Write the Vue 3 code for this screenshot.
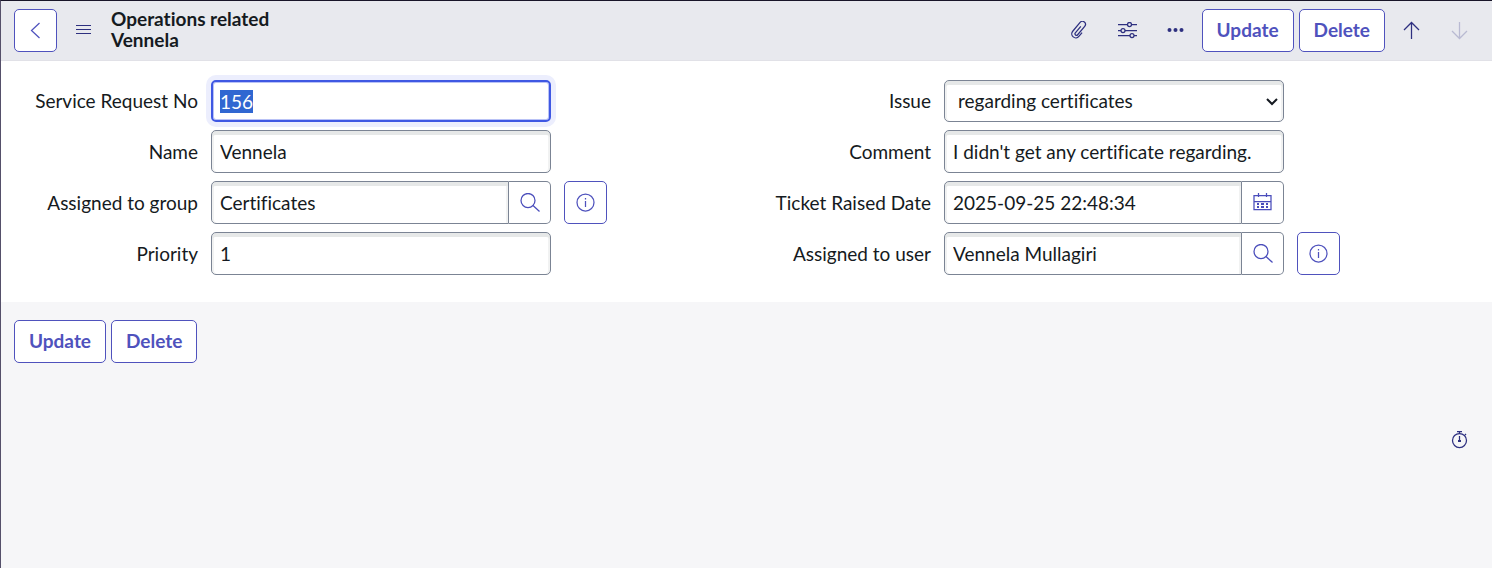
<script setup>
import { onMounted, ref } from 'vue'

const requestNo = ref('156')
const name = ref('Vennela')
const group = ref('Certificates')
const priority = ref('1')
const issue = ref('regarding certificates')
const comment = ref("I didn't get any certificate regarding.")
const raised = ref('2025-09-25 22:48:34')
const user = ref('Vennela Mullagiri')
const firstField = ref(null)

onMounted(() => {
  firstField.value.focus()
  firstField.value.select()
})
</script>

<template>
  <div class="page">
    <header class="bar">
      <button class="btn square" type="button" aria-label="Back">
        <svg width="19" height="19" viewBox="0 0 19 19"><path d="M13.500 2 5.500 9.500l8 7.500" /></svg>
      </button>
      <button class="icon menu" type="button" aria-label="Menu">
        <svg class="thin" width="15" height="11" viewBox="0 0 15 11"><path d="M0 .5h15M0 4.500h15M0 8.500h15" /></svg>
      </button>
      <h1 class="title">Operations related<br />Vennela</h1>
      <div class="tools">
        <button class="icon" type="button" aria-label="Attachments">
          <svg width="19" height="19" viewBox="0 0 19 19"><path transform="translate(9 9) rotate(40)" d="M4 0V5a4 4 0 0 1-8 0V-6.500a3 3 0 0 1 6 0V4.500a1.500 1.500 0 0 1-3 0V-4" /></svg>
        </button>
        <button class="icon" type="button" aria-label="Personalize form">
          <svg width="19" height="17" viewBox="0 0 19 17"><path d="M0 2.500h9.500M13.500 2.500H19M0 8.500h3M7 8.500h12M0 13.500h12M16 13.500h3" /><circle cx="11.500" cy="2.500" r="2" /><circle cx="5" cy="8.500" r="2" /><circle cx="14" cy="13.500" r="2" /></svg>
        </button>
        <button class="icon" type="button" aria-label="More options">
          <svg class="solid" width="17" height="5" viewBox="0 0 17 5"><circle cx="2.500" cy="2" r="2" /><circle cx="8.500" cy="2" r="2" /><circle cx="14.500" cy="2" r="2" /></svg>
        </button>
        <button class="btn" type="button">Update</button>
        <button class="btn" type="button">Delete</button>
        <button class="icon" type="button" aria-label="Previous record">
          <svg width="17" height="19" viewBox="0 0 17 19"><path d="M8.500 18V1.500M1 9l7.500-7.500L16 9" /></svg>
        </button>
        <button class="icon" type="button" aria-label="Next record" disabled>
          <svg width="17" height="19" viewBox="0 0 17 19"><path d="M8.500 1v16.500M1 10l7.500 7.500L16 10" /></svg>
        </button>
      </div>
    </header>

    <form class="form" @submit.prevent>
      <div class="column">
        <div class="row">
          <label for="request-no">Service Request No</label>
          <input id="request-no" ref="firstField" v-model="requestNo" class="control" type="text" />
        </div>
        <div class="row">
          <label for="name">Name</label>
          <input id="name" v-model="name" class="control" type="text" />
        </div>
        <div class="row">
          <label for="group">Assigned to group</label>
          <div class="group">
            <input id="group" v-model="group" class="control" type="text" />
            <button class="addon" type="button" aria-label="Look up group">
              <svg width="20" height="20" viewBox="0 0 20 20"><circle cx="8" cy="7.500" r="7" /><path d="m13 12.500 6.500 6" /></svg>
            </button>
          </div>
          <button class="btn square" type="button" aria-label="Group information">
            <svg width="19" height="19" viewBox="0 0 19 19"><circle cx="9.500" cy="9.500" r="8.500" /><path d="M9.500 8v6M9.500 5v1.500" /></svg>
          </button>
        </div>
        <div class="row">
          <label for="priority">Priority</label>
          <input id="priority" v-model="priority" class="control" type="text" />
        </div>
      </div>

      <div class="column">
        <div class="row">
          <label for="issue">Issue</label>
          <div class="select">
            <select id="issue" v-model="issue" class="control">
              <option>regarding certificates</option>
            </select>
            <svg class="chevron" width="12" height="8" viewBox="0 0 12 8"><path d="m1 1 5 5 5-5" /></svg>
          </div>
        </div>
        <div class="row">
          <label for="comment">Comment</label>
          <input id="comment" v-model="comment" class="control" type="text" />
        </div>
        <div class="row">
          <label for="raised">Ticket Raised Date</label>
          <div class="group">
            <input id="raised" v-model="raised" class="control" type="text" />
            <button class="addon" type="button" aria-label="Choose date">
              <svg width="19" height="19" viewBox="0 0 19 19"><path d="M1 2.500h17v14H1zM1 8.500h17M5.500 0v4M13.500 0v4" /><path class="dots" d="M4 11h2M8 11h3M13 11h2M4 14h2M8 14h3M13 14h2" /></svg>
            </button>
          </div>
        </div>
        <div class="row">
          <label for="user">Assigned to user</label>
          <div class="group">
            <input id="user" v-model="user" class="control" type="text" />
            <button class="addon" type="button" aria-label="Look up user">
              <svg width="20" height="20" viewBox="0 0 20 20"><circle cx="8" cy="7.500" r="7" /><path d="m13 12.500 6.500 6" /></svg>
            </button>
          </div>
          <button class="btn square" type="button" aria-label="User information">
            <svg width="19" height="19" viewBox="0 0 19 19"><circle cx="9.500" cy="9.500" r="8.500" /><path d="M9.500 8v6M9.500 5v1.500" /></svg>
          </button>
        </div>
      </div>
    </form>

    <footer class="footer">
      <div class="actions">
        <button class="btn" type="button">Update</button>
        <button class="btn" type="button">Delete</button>
      </div>
      <button class="icon timer" type="button" aria-label="Response time">
        <svg width="17" height="19" viewBox="0 0 17 19"><circle cx="8.500" cy="10.500" r="7" /><path d="M6 1.500h5M8.500 1.500v2M14 4l1 1M8.500 6v5" /><path class="dots" d="M7 11h3" /></svg>
      </button>
    </footer>
  </div>
</template>

<style>
body {
  margin: 0;
  background: #f6f6f8;
}
</style>

<style scoped>
.page {
  box-sizing: border-box;
  min-height: 100vh;
  border-top: 1px solid #181528;
  border-left: 1px solid #55506a;
  background: #f6f6f8;
  color: #151a21;
  font: 19px/22px Lato, "Open Sans", sans-serif;
  font-variant-ligatures: none;
}

button,
input,
select {
  box-sizing: border-box;
  margin: 0;
  font: inherit;
  font-variant-ligatures: none;
}

svg {
  display: block;
  fill: none;
  stroke: currentColor;
  stroke-width: 1.25;
}

.solid {
  fill: currentColor;
  stroke: none;
}

.thin {
  stroke-width: 1;
}

.dots {
  stroke-width: 2;
}

.bar {
  display: flex;
  align-items: center;
  box-sizing: border-box;
  min-height: 60px;
  padding: 0 11px 0 13px;
  border-bottom: 1px solid #e1e1e7;
  background: #e8e9ee;
}

.title {
  margin: 0 0 4px 6px;
  font-size: 19px;
  line-height: 21px;
  font-weight: 700;
}

.tools {
  display: flex;
  gap: 5px;
  margin-left: auto;
}

.btn {
  display: flex;
  align-items: center;
  justify-content: center;
  height: 43px;
  padding: 0 14px 2px;
  border: 1px solid #4f52bd;
  border-radius: 5px;
  background: #fff;
  color: #4f52bd;
  font-weight: 700;
}

.square {
  flex: none;
  width: 43px;
  padding: 0;
}

.icon {
  display: flex;
  align-items: center;
  justify-content: center;
  width: 43px;
  height: 43px;
  padding: 0;
  border: 0;
  background: none;
  color: #2e3080;
}

.icon:disabled {
  color: #b9bad2;
}

.menu {
  margin-left: 5px;
}

.form {
  display: grid;
  grid-template-columns: 1fr 1fr;
  padding: 19px 25px 27px 0;
  background: #fff;
}

.column {
  display: flex;
  flex-direction: column;
  gap: 8px;
  padding-right: 127px;
}

.row {
  display: grid;
  grid-template-columns: 197px minmax(0, 1fr) 43px;
  column-gap: 13px;
  align-items: center;
  height: 43px;
}

.row:first-child {
  height: 42px;
}

.row label {
  text-align: right;
}

.control {
  width: 100%;
  height: 100%;
  padding: 0 8px;
  border: 1px solid #7b8494;
  border-radius: 5px;
  outline: none;
  background: #fff;
  box-shadow: inset 0 4px #e6e8e8, inset 2px 0 #f1f2f2, inset -2px 0 #f1f2f2;
  color: inherit;
}

.control:focus {
  padding: 0 7px;
  border: 2px solid #3f58e3;
  box-shadow: inset 0 0 0 1px #b9c2f6, 0 0 0 5px #eceefd;
}

.control::selection {
  background: #3067d1;
  color: #fff;
}

.group {
  display: flex;
  height: 100%;
}

.group .control {
  flex: 1;
  min-width: 0;
  border-radius: 5px 0 0 5px;
}

.addon {
  display: flex;
  align-items: center;
  justify-content: center;
  width: 42px;
  padding: 0;
  border: 1px solid #7b8494;
  border-left: 0;
  border-radius: 0 5px 5px 0;
  background: #fff;
  color: #4a4dbb;
}

.select {
  position: relative;
  height: 100%;
}

.select .control {
  appearance: none;
  padding: 0 28px 0 13px;
}

.chevron {
  position: absolute;
  top: 18px;
  right: 6px;
  stroke-width: 2;
  pointer-events: none;
}

.footer {
  display: flex;
  flex-direction: column;
  padding: 18px 11px 18px 13px;
}

.actions {
  display: flex;
  gap: 5px;
}

.timer {
  align-self: flex-end;
  margin-top: 55px;
}
</style>
